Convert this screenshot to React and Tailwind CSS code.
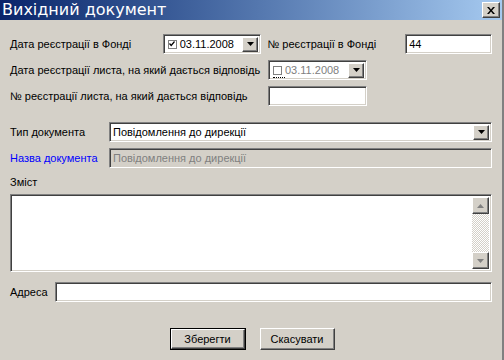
import React from "react";

const sunken =
  "border border-t-[#808080] border-l-[#808080] border-b-white border-r-white shadow-[inset_1px_1px_0_#404040,inset_-1px_-1px_0_#d4d0c8]";
const raised =
  "border border-t-white border-l-white border-b-[#404040] border-r-[#404040] shadow-[inset_-1px_-1px_0_#808080]";

function Arrow({ color = "#000", up = false }) {
  return (
    <svg width="7" height="4" viewBox="0 0 7 4" className="block">
      {up ? (
        <polygon points="0,4 7,4 3.5,0" fill={color} />
      ) : (
        <polygon points="0,0 7,0 3.5,4" fill={color} />
      )}
    </svg>
  );
}

function DropBtn({ className = "" }) {
  return (
    <div
      className={`w-[16px] h-[15px] bg-[#d4d0c8] flex items-center justify-center ${raised} ${className}`}
    >
      <Arrow />
    </div>
  );
}

function Check({ checked, disabled }) {
  return (
    <div className="relative w-[9px] h-[9px] flex items-center justify-center">
      <div className="w-[9px] h-[9px] border border-[#808080] bg-white flex items-center justify-center">
        {checked && (
          <svg width="6" height="6" viewBox="0 0 6 6" className="block">
            <polyline points="0.5,2.5 2.2,4.5 5.5,0.5" fill="none" stroke="#000" strokeWidth="1.2" />
          </svg>
        )}
      </div>
      {disabled && (
        <div className="absolute left-0 bottom-[-3px] w-[12px] border-b border-dotted border-black" />
      )}
    </div>
  );
}

function DatePicker({ disabled, checked }) {
  return (
    <div className={`w-[99px] h-[20px] bg-white flex items-center pl-[4px] pr-[2px] ${sunken}`}>
      <Check checked={checked} disabled={disabled} />
      <span className={`ml-[3px] flex-1 ${disabled ? "text-[#808080]" : "text-black"}`}>03.11.2008</span>
      <DropBtn />
    </div>
  );
}

export default function App() {
  return (
    <div
      className="w-[504px] h-[360px] bg-[#d4d0c8] flex flex-col text-[11px] text-black border-r-2 border-r-[#808080] overflow-hidden"
      style={{ fontFamily: "'Liberation Sans', Arial, sans-serif" }}
    >
      {/* Title bar */}
      <div className="h-[20px] shrink-0 bg-gradient-to-r from-[#0a246a] to-[#a6caf0] flex items-center pl-[2px] pr-[2px]">
        <span
          className="text-white text-[16px] leading-none flex-1"
          style={{ fontFamily: "'DejaVu Sans', Verdana, sans-serif" }}
        >
          Вихідний документ
        </span>
        <div className={`w-[18px] h-[16px] bg-[#d4d0c8] flex items-center justify-center ${raised}`}>
          <svg width="8" height="7" viewBox="0 0 8 7" className="block">
            <path d="M0,0 L2,0 L4,2.5 L6,0 L8,0 L5,3.5 L8,7 L6,7 L4,4.5 L2,7 L0,7 L3,3.5 Z" fill="#000" />
          </svg>
        </div>
      </div>

      <div className="flex flex-col pl-[10px] pr-[10px]">
        {/* Row 1 */}
        <div className="mt-[14px] h-[20px] flex items-center">
          <span className="w-[153px]">Дата реєстрації в Фонді</span>
          <DatePicker checked />
          <span className="ml-[6px] w-[138px]">№ реєстрації в Фонді</span>
          <div className={`w-[87px] h-[20px] bg-white flex items-center pl-[3px] ${sunken}`}>44</div>
        </div>

        {/* Row 2 */}
        <div className="mt-[6px] h-[20px] flex items-center">
          <span className="w-[258px]">Дата реєстрації листа, на який дається відповідь</span>
          <DatePicker disabled />
        </div>

        {/* Row 3 */}
        <div className="mt-[6px] h-[20px] flex items-center">
          <span className="w-[258px]">№ реєстрації листа, на який дається відповідь</span>
          <div className={`w-[99px] h-[20px] bg-white ${sunken}`} />
        </div>

        {/* Row 4 */}
        <div className="mt-[16px] h-[20px] flex items-center">
          <span className="w-[99px]">Тип документа</span>
          <div className={`flex-1 h-[20px] bg-white flex items-center pl-[3px] pr-[2px] ${sunken}`}>
            <span className="flex-1">Повідомлення до дирекції</span>
            <DropBtn />
          </div>
        </div>

        {/* Row 5 */}
        <div className="mt-[6px] h-[20px] flex items-center">
          <span className="w-[99px] text-[#0000ff]">Назва документа</span>
          <div className={`flex-1 h-[20px] bg-[#d4d0c8] flex items-center pl-[3px] text-[#808080] ${sunken}`}>
            Повідомлення до дирекції
          </div>
        </div>

        {/* Зміст */}
        <div className="mt-[6px] h-[16px] flex items-center">Зміст</div>
        <div className={`mt-[4px] h-[78px] bg-white flex justify-end p-[2px] ${sunken}`}>
          <div className="w-[17px] flex flex-col">
            <div className={`h-[17px] bg-[#d4d0c8] flex items-center justify-center ${raised}`}>
              <Arrow color="#808080" up />
            </div>
            <div className="flex-1 bg-[repeating-conic-gradient(#d4d0c8_0_25%,#ffffff_0_50%)] bg-[length:2px_2px]" />
            <div className={`h-[17px] bg-[#d4d0c8] flex items-center justify-center ${raised}`}>
              <Arrow color="#808080" />
            </div>
          </div>
        </div>

        {/* Адреса */}
        <div className="mt-[10px] h-[20px] flex items-center">
          <span className="w-[45px]">Адреса</span>
          <div className={`flex-1 h-[20px] bg-white ${sunken}`} />
        </div>

        {/* Buttons */}
        <div className="mt-[26px] flex justify-center gap-[14px] pl-[2px]">
          <div className="border border-black">
            <div className={`w-[74px] h-[20px] bg-[#d4d0c8] flex items-center justify-center ${raised}`}>
              Зберегти
            </div>
          </div>
          <div className={`w-[75px] h-[22px] bg-[#d4d0c8] flex items-center justify-center ${raised}`}>
            Скасувати
          </div>
        </div>
      </div>
    </div>
  );
}
